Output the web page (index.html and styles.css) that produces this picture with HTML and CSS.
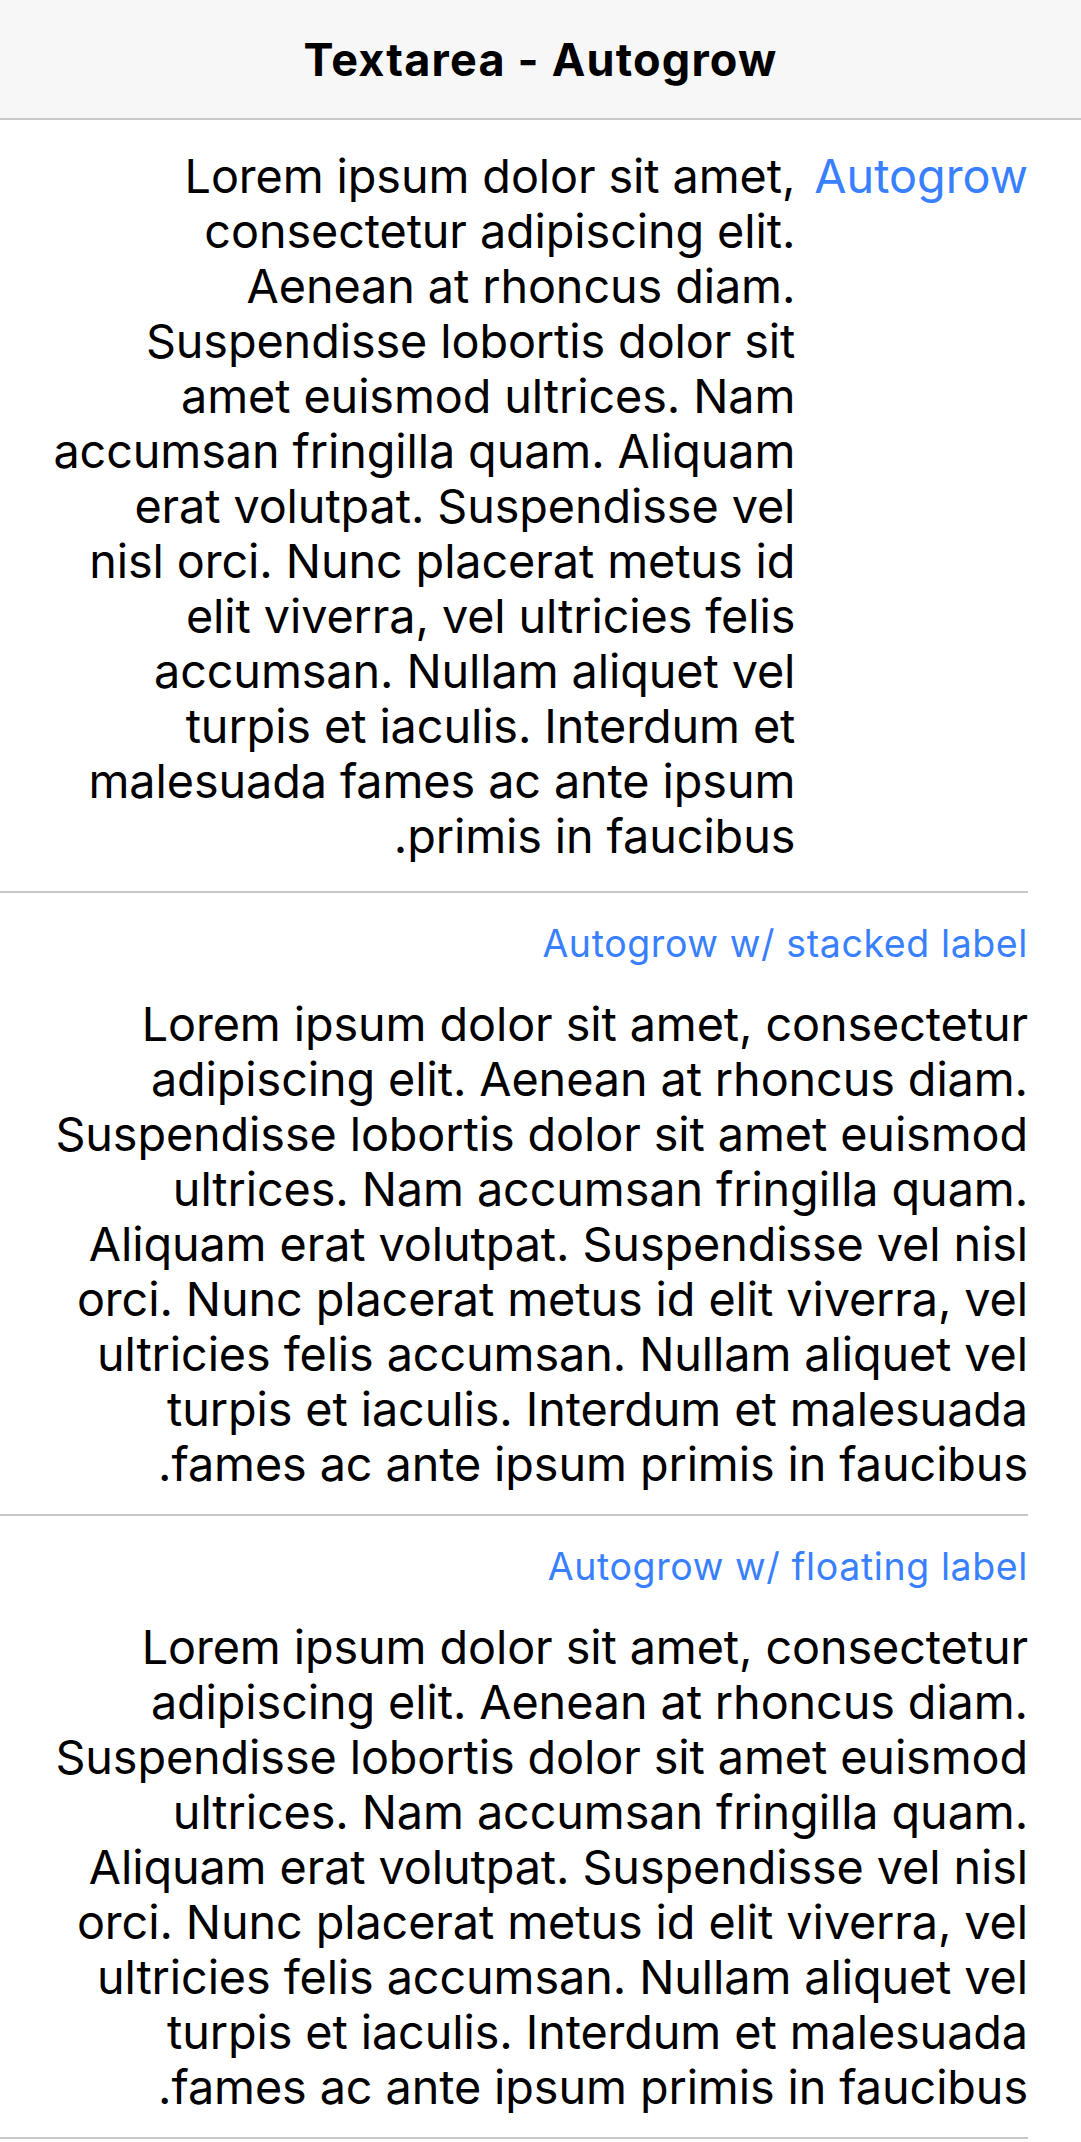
FILE: index.html
```html
<!DOCTYPE html>
<html lang="en" dir="rtl">
<head>
<meta charset="utf-8">
<title>Textarea - Autogrow</title>
<link rel="stylesheet" href="styles.css">
</head>
<body>
<header class="toolbar">
  <h1 class="title">Textarea - Autogrow</h1>
</header>
<main class="list">
  <div class="item">
    <div class="inner inner-inline">
      <div class="label-inline">Autogrow</div>
      <p class="ta"><span class="ln">Lorem ipsum dolor sit amet,</span><span class="ln">consectetur adipiscing elit.</span><span class="ln">Aenean at rhoncus diam.</span><span class="ln">Suspendisse lobortis dolor sit</span><span class="ln">amet euismod ultrices. Nam</span><span class="ln">accumsan fringilla quam. Aliquam</span><span class="ln">erat volutpat. Suspendisse vel</span><span class="ln">nisl orci. Nunc placerat metus id</span><span class="ln">elit viverra, vel ultricies felis</span><span class="ln">accumsan. Nullam aliquet vel</span><span class="ln">turpis et iaculis. Interdum et</span><span class="ln">malesuada fames ac ante ipsum</span><span class="ln-last">primis in faucibus.</span></p>
    </div>
  </div>
  <div class="item">
    <div class="inner inner-stacked">
      <div class="label-small">Autogrow w/ stacked label</div>
      <p class="ta"><span class="ln">Lorem ipsum dolor sit amet, consectetur</span><span class="ln">adipiscing elit. Aenean at rhoncus diam.</span><span class="ln">Suspendisse lobortis dolor sit amet euismod</span><span class="ln">ultrices. Nam accumsan fringilla quam.</span><span class="ln">Aliquam erat volutpat. Suspendisse vel nisl</span><span class="ln">orci. Nunc placerat metus id elit viverra, vel</span><span class="ln">ultricies felis accumsan. Nullam aliquet vel</span><span class="ln">turpis et iaculis. Interdum et malesuada</span><span class="ln-last">fames ac ante ipsum primis in faucibus.</span></p>
    </div>
  </div>
  <div class="item">
    <div class="inner inner-stacked">
      <div class="label-small">Autogrow w/ floating label</div>
      <p class="ta"><span class="ln">Lorem ipsum dolor sit amet, consectetur</span><span class="ln">adipiscing elit. Aenean at rhoncus diam.</span><span class="ln">Suspendisse lobortis dolor sit amet euismod</span><span class="ln">ultrices. Nam accumsan fringilla quam.</span><span class="ln">Aliquam erat volutpat. Suspendisse vel nisl</span><span class="ln">orci. Nunc placerat metus id elit viverra, vel</span><span class="ln">ultricies felis accumsan. Nullam aliquet vel</span><span class="ln">turpis et iaculis. Interdum et malesuada</span><span class="ln-last">fames ac ante ipsum primis in faucibus.</span></p>
    </div>
  </div>
</main>
</body>
</html>
```
FILE: styles.css
```css
* { box-sizing: border-box; }
html, body { margin: 0; padding: 0; background: #ffffff; }
body {
  font-family: Inter, "Noto Sans", "Liberation Sans", sans-serif;
  color: #000000;
  -webkit-font-smoothing: antialiased;
}
.toolbar {
  height: 120px;
  background: #f7f7f7;
  border-bottom: 2px solid #c8c8c8;
  display: flex;
  align-items: center;
  justify-content: center;
}
.title {
  margin: 0;
  font-size: 45px;
  font-weight: 700;
  line-height: 56px;
  letter-spacing: 1.2px;
  padding-top: 2px;
}
.list { display: flex; flex-direction: column; }
.item {
  padding-right: 53px;
}
.inner {
  display: flex;
  border-bottom: 2px solid #c8c7cc;
  padding-left: 44px;
}
.inner-inline {
  flex-direction: row;
  align-items: flex-start;
  padding-top: 29px;
  padding-bottom: 27px;
}
.label-inline {
  color: #3880ff;
  font-size: 46.75px;
  line-height: 55px;
  white-space: nowrap;
  margin-left: 19px;
  flex: none;
}
.ta {
  margin: 0;
  font-size: 46.75px;
  line-height: 55px;
  letter-spacing: -0.1px;
  white-space: nowrap;
  text-align: right;
  flex: 1;
}
.ln {
  display: block;
  unicode-bidi: plaintext;
  text-align: right;
}
.ln-last {
  display: block;
  text-align: right;
}
.inner-stacked {
  flex-direction: column;
  align-items: stretch;
  padding-top: 29px;
  padding-bottom: 22px;
}
.label-small {
  color: #3880ff;
  font-size: 37.5px;
  line-height: 44px;
  letter-spacing: 0.6px;
  white-space: nowrap;
  margin-bottom: 31px;
}
```
